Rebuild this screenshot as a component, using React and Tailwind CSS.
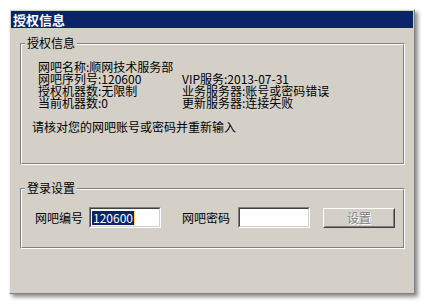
import React from "react";

const font = { fontFamily: '"Noto Sans CJK SC", "Liberation Sans", sans-serif' };

function GroupBox({ title, className = "", children }) {
  // etched frame: gray line outside, white line inside
  return (
    <div className={`border border-t-[#808080] border-l-[#808080] border-r-white border-b-white ${className}`}>
      <div className="h-full border border-t-white border-l-white border-r-[#808080] border-b-[#808080]">
        <div className="-mt-[8px] ml-[3px] w-fit bg-[#d4d0c8] px-[2px] text-[12px] leading-[12px]">
          {title}
        </div>
        {children}
      </div>
    </div>
  );
}

function SunkenInput({ children }) {
  return (
    <div className="h-[21px] w-[72px] border border-t-[#808080] border-l-[#808080] border-r-white border-b-white">
      <div className="flex h-full items-center border border-t-[#404040] border-l-[#404040] border-r-[#d4d0c8] border-b-[#d4d0c8] bg-white pl-[1px]">
        {children}
      </div>
    </div>
  );
}

export default function App() {
  const info = [
    ["网吧名称:顺网技术服务部", ""],
    ["网吧序列号:120600", "VIP服务:2013-07-31"],
    ["授权机器数:无限制", "业务服务器:账号或密码错误"],
    ["当前机器数:0", "更新服务器:连接失败"],
  ];

  return (
    <div className="min-h-[304px] bg-white pt-[9px] pl-[9px] text-black" style={font}>
      <div className="h-[285px] w-[406px] border border-t-[#f4f4f4] border-l-[#f4f4f4] border-r-[#808080] border-b-[#808080] bg-[#d4d0c8] p-[1px] shadow-[3px_3px_4px_rgba(0,0,0,0.45)]">
        <div className="flex h-[17px] items-center bg-[#0a246a] pl-[2px] text-[13px] font-bold leading-[13px] text-white">
          授权信息
        </div>

        <div className="pt-[15px] pl-[9px] pr-[8px]">
          <GroupBox title="授权信息" className="h-[122px]">
            <div className="mt-[12px] pl-[10px] text-[12px] leading-[12px]">
              <div className="ml-[6px] grid grid-cols-[144px_1fr]">
                {info.map(([a, b], i) => (
                  <React.Fragment key={i}>
                    <div className="h-[12px] whitespace-nowrap">{a}</div>
                    <div className="h-[12px] whitespace-nowrap">{b}</div>
                  </React.Fragment>
                ))}
              </div>
              <div className="mt-[12px]">请核对您的网吧账号或密码并重新输入</div>
            </div>
          </GroupBox>

          <GroupBox title="登录设置" className="mt-[23px] h-[61px]">
            <div className="mt-[13px] flex items-center pl-[13px] text-[12px] leading-[12px]">
              <span className="w-[48px]">网吧编号</span>
              <div className="ml-[6px]">
                <SunkenInput>
                  <span className="bg-[#0a246a] px-[1px] text-[12px] leading-[14px] text-white">120600</span>
                  <span className="h-[14px] w-[1px] bg-[#f5d35a]" />
                </SunkenInput>
              </div>
              <span className="ml-[21px] w-[48px]">网吧密码</span>
              <div className="ml-[8px]">
                <SunkenInput />
              </div>
              <button
                disabled
                className="ml-[13px] h-[20px] w-[72px] border border-t-white border-l-white border-r-[#404040] border-b-[#404040] bg-[#d4d0c8]"
              >
                <div className="flex h-full items-center justify-center border border-t-[#d4d0c8] border-l-[#d4d0c8] border-r-[#808080] border-b-[#808080] text-[12px] leading-[12px] text-[#808080] [text-shadow:1px_1px_0_#ffffff]">
                  设置
                </div>
              </button>
            </div>
          </GroupBox>
        </div>
      </div>
    </div>
  );
}
